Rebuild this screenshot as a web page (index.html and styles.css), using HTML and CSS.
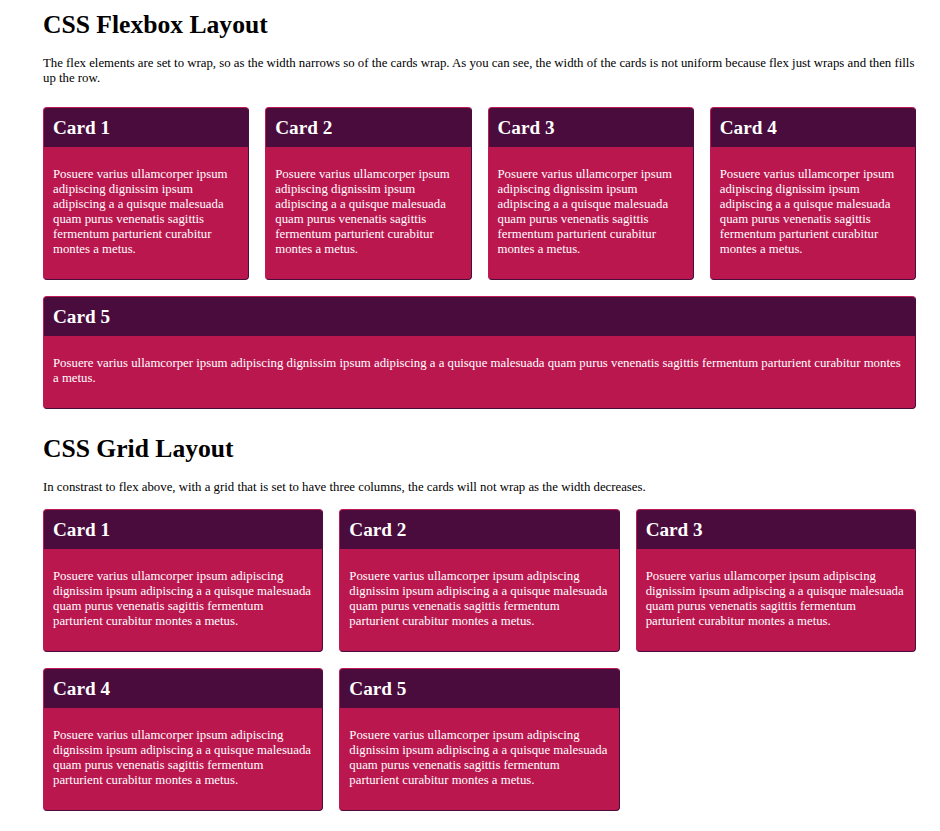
FILE: index.html
```html
<!DOCTYPE html>
<html>
<head>
<meta charset="utf-8">
<link rel="stylesheet" href="styles.css">
</head>
<body>
<div class="wrap">
  <h1>CSS Flexbox Layout</h1>
  <p class="intro">The flex elements are set to wrap, so as the width narrows so of the cards wrap. As you can see, the width of the cards is not uniform because flex just wraps and then fills up the row.</p>
  <div class="flex">
    <div class="card"><h2>Card 1</h2><div class="body"><p>Posuere varius ullamcorper ipsum adipiscing dignissim ipsum adipiscing a a quisque malesuada quam purus venenatis sagittis fermentum parturient curabitur montes a metus.</p></div></div>
    <div class="card"><h2>Card 2</h2><div class="body"><p>Posuere varius ullamcorper ipsum adipiscing dignissim ipsum adipiscing a a quisque malesuada quam purus venenatis sagittis fermentum parturient curabitur montes a metus.</p></div></div>
    <div class="card"><h2>Card 3</h2><div class="body"><p>Posuere varius ullamcorper ipsum adipiscing dignissim ipsum adipiscing a a quisque malesuada quam purus venenatis sagittis fermentum parturient curabitur montes a metus.</p></div></div>
    <div class="card"><h2>Card 4</h2><div class="body"><p>Posuere varius ullamcorper ipsum adipiscing dignissim ipsum adipiscing a a quisque malesuada quam purus venenatis sagittis fermentum parturient curabitur montes a metus.</p></div></div>
    <div class="card"><h2>Card 5</h2><div class="body"><p>Posuere varius ullamcorper ipsum adipiscing dignissim ipsum adipiscing a a quisque malesuada quam purus venenatis sagittis fermentum parturient curabitur montes a metus.</p></div></div>
  </div>
  <h1 class="second">CSS Grid Layout</h1>
  <p class="intro">In constrast to flex above, with a grid that is set to have three columns, the cards will not wrap as the width decreases.</p>
  <div class="grid">
    <div class="card"><h2>Card 1</h2><div class="body"><p>Posuere varius ullamcorper ipsum adipiscing dignissim ipsum adipiscing a a quisque malesuada quam purus venenatis sagittis fermentum parturient curabitur montes a metus.</p></div></div>
    <div class="card"><h2>Card 2</h2><div class="body"><p>Posuere varius ullamcorper ipsum adipiscing dignissim ipsum adipiscing a a quisque malesuada quam purus venenatis sagittis fermentum parturient curabitur montes a metus.</p></div></div>
    <div class="card"><h2>Card 3</h2><div class="body"><p>Posuere varius ullamcorper ipsum adipiscing dignissim ipsum adipiscing a a quisque malesuada quam purus venenatis sagittis fermentum parturient curabitur montes a metus.</p></div></div>
    <div class="card"><h2>Card 4</h2><div class="body"><p>Posuere varius ullamcorper ipsum adipiscing dignissim ipsum adipiscing a a quisque malesuada quam purus venenatis sagittis fermentum parturient curabitur montes a metus.</p></div></div>
    <div class="card"><h2>Card 5</h2><div class="body"><p>Posuere varius ullamcorper ipsum adipiscing dignissim ipsum adipiscing a a quisque malesuada quam purus venenatis sagittis fermentum parturient curabitur montes a metus.</p></div></div>
  </div>
</div>
</body>
</html>
```
FILE: styles.css
```css
html, body {
  margin: 0;
  padding: 0;
  background: #fff;
}
body {
  font-family: "Liberation Serif", "Times New Roman", serif;
  font-size: 12.8px;
  color: #000;
}
.wrap {
  width: 873px;
  margin-left: 43px;
  padding-top: 10px;
  padding-bottom: 20px;
}
h1 {
  font-size: 25.6px;
  line-height: 29px;
  margin: 0;
  font-weight: bold;
}
h1.second {
  margin-top: 25px;
}
.intro {
  margin: 17px 0 0;
  line-height: 15px;
}
.flex {
  display: flex;
  flex-wrap: wrap;
  gap: 16px 16px;
  margin-top: 21px;
}
.flex .card {
  flex: 1 1 200px;
}
.grid {
  display: grid;
  grid-template-columns: repeat(3, 1fr);
  gap: 16px 16px;
  margin-top: 14px;
}
.card {
  background: #bb174f;
  border: 1px solid;
  border-color: #c01a55 #4a0c3d #4a0c3d #c01a55;
  border-radius: 4px;
  overflow: hidden;
  color: #fff;
}
.card h2 {
  margin: 0;
  background: #4a0c3d;
  font-size: 19.2px;
  line-height: 22px;
  padding: 9px 9px 8px;
}
.card .body {
  padding: 20px 9px 22px;
}
.card p {
  margin: 0;
  line-height: 15px;
}
```
